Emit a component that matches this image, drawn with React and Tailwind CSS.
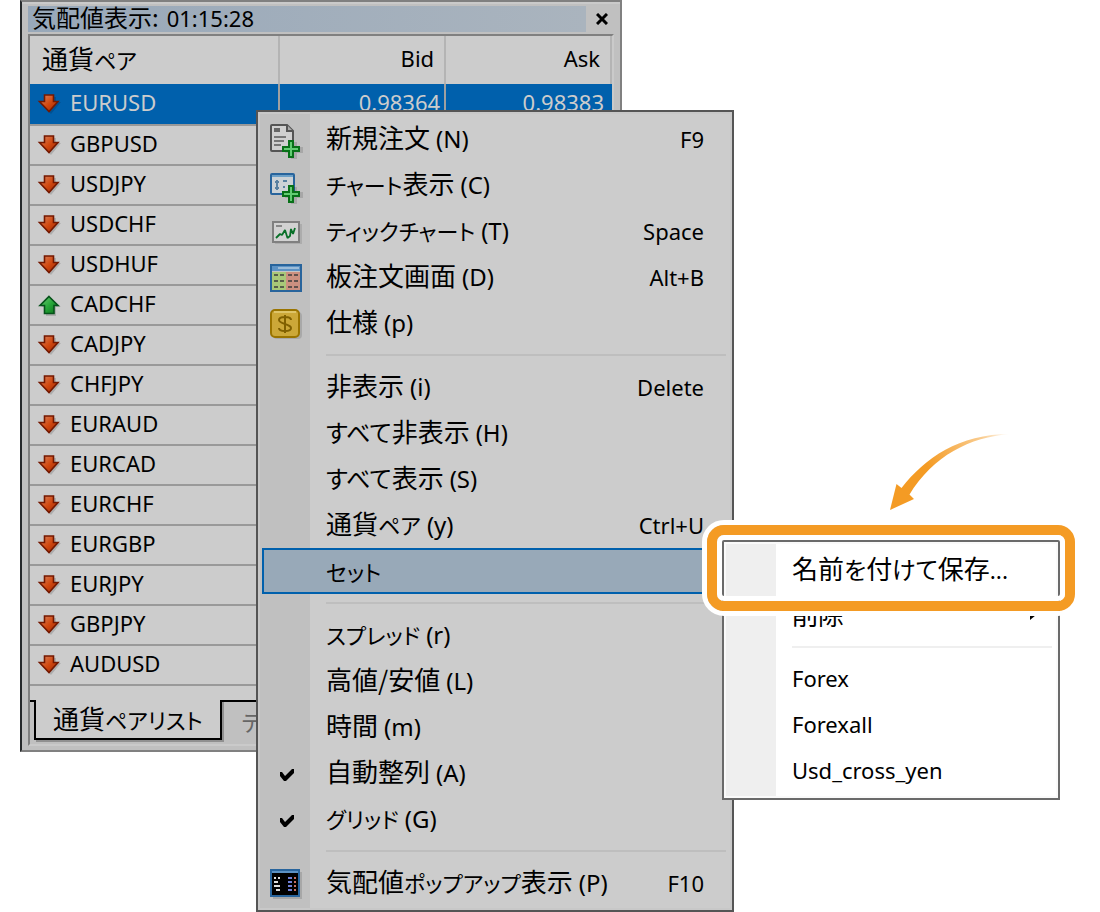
import React, { useState } from 'react';

const LATIN = "font-['Noto_Sans','Noto_Sans_CJK_JP',sans-serif] text-[22px]";
const JAPANESE = "font-['Noto_Sans_CJK_JP','Noto_Sans',sans-serif] text-[26px] [font-feature-settings:'palt']";

// Kana are set narrower than kanji, as in the Windows UI font
const JapaneseText = ({ children }) =>
  children.split(/([ァ-ヶー]+|[ぁ-ん]+|\.+)/).map((part, i) => {
    if (/^[ァ-ヶー.]/.test(part)) return <span key={i} className="text-[22px]">{part}</span>;
    if (/^[ぁ-ん]/.test(part)) return <span key={i} className="text-[24px]">{part}</span>;
    return part;
  });

const ArrowIcon = ({ up }) => (
  <svg width="24" height="22" viewBox="0 -1 24 22" className="block overflow-visible">
    <defs>
      <linearGradient id="redArrow" x1="0" y1="0" x2="1" y2="1">
        <stop offset="0" stopColor="#d88a68" />
        <stop offset="0.5" stopColor="#d24a12" />
        <stop offset="1" stopColor="#a02400" />
      </linearGradient>
      <linearGradient id="greenArrow" x1="0" y1="0" x2="1" y2="1">
        <stop offset="0" stopColor="#74cc78" />
        <stop offset="0.5" stopColor="#28a83a" />
        <stop offset="1" stopColor="#087018" />
      </linearGradient>
    </defs>
    {up ? (
      <>
        <path d="M13 3l10 9h-5v9H8v-9H3z" fill="#000" opacity="0.15" />
        <path d="M11 1.500L20 10.500h-4v8H6.500v-8H2z" fill="url(#greenArrow)" stroke="#06521a" strokeWidth="1.600" />
      </>
    ) : (
      <>
        <path d="M8 3h10v5h5L13 20 3 10h5z" fill="#000" opacity="0.15" />
        <path d="M6.500 1h9v6.500h4.500L11 17.500 1.500 7.500h5z" fill="url(#redArrow)" stroke="#741800" strokeWidth="1.600" />
      </>
    )}
  </svg>
);

const GreenPlus = () => (
  <>
    <path d="M21 18h6v5h6v6h-6v6h-6v-6h-6v-6h6z" fill="#000" opacity="0.13" />
    <path d="M19 17h4v6h6v4h-6v6h-4v-6h-6v-4h6z" fill="#62cc72" stroke="#087018" strokeWidth="2" />
  </>
);

const NewOrderIcon = () => (
  <svg width="32" height="36" viewBox="0 -2 32 36" className="block overflow-visible">
    <path d="M2 1h15l6 6v20H2a1 1 0 0 1-1-1V2a1 1 0 0 1 1-1z" fill="#d0d0d0" stroke="#555" strokeWidth="2" />
    <path d="M17 1v6h6" fill="#aaa" stroke="#555" strokeWidth="2" />
    <path d="M4 13h12M4 17h10M4 21h7" stroke="#777" strokeWidth="2" />
    <path d="M4 4h6v4H4z" fill="#666" />
    <GreenPlus />
  </svg>
);

const ChartWindowIcon = () => (
  <svg width="32" height="36" viewBox="0 -1 32 36" className="block overflow-visible">
    <rect x="1" y="5" width="23" height="20" rx="1" fill="#ccd2d6" stroke="#28649c" strokeWidth="2" />
    <path d="M2 7h21" stroke="#6ca0c8" strokeWidth="2" />
    <path d="M7 11v10M5 13h4M5 19h4M13 12h4M13 18h2" stroke="#5880a0" strokeWidth="2" />
    <GreenPlus />
  </svg>
);

const TickIcon = () => (
  <svg width="32" height="24" viewBox="0 0 32 24" className="block">
    <path d="M5 4h27v20H5z" fill="#000" opacity="0.1" />
    <rect x="3" y="2" width="26" height="20" fill="#d2d2d2" stroke="#808080" strokeWidth="2" />
    <path d="M6 6h6" stroke="#888" strokeWidth="2" />
    <path
      d="M6 18l4-4 2 1 3-5 2.500 8 2.500-2 1-7 2 5 2-6"
      fill="none"
      stroke="#087028"
      strokeWidth="1.800"
      strokeLinejoin="bevel"
    />
  </svg>
);

const DepthIcon = () => (
  <svg width="32" height="30" viewBox="0 0 32 30" className="block">
    <rect x="1" y="2" width="30" height="26" fill="#c4c4c4" stroke="#28649c" strokeWidth="2" />
    <path d="M2 3h28v5H2z" fill="#5c92c4" />
    <path d="M8 5h21" stroke="#9cbcd8" strokeWidth="2" />
    <path d="M2 9h14v18H2z" fill="#a8c878" />
    <path d="M16 9h14v18H16z" fill="#cc9080" />
    <path
      d="M4 12h10M4 18h10M4 24h10M18 12h10M18 18h10M18 24h10"
      stroke="#3c3c3c"
      strokeWidth="1.600"
      strokeDasharray="4 2"
    />
  </svg>
);

const SpecIcon = () => (
  <svg width="32" height="30" viewBox="0 0 32 30" className="block">
    <rect x="3" y="3" width="29" height="27" rx="4" fill="#000" opacity="0.12" />
    <rect x="1" y="1" width="28" height="27" rx="4" fill="#cca838" stroke="#9a7400" strokeWidth="2" />
    <path d="M4 3h22" stroke="#dec468" strokeWidth="2" />
    <path
      d="M15 6v18M21 11c0-2-3-3-6-3s-6 1-6 3 3 3 6 4 6 2 6 4-3 3-6 3-6-1-6-3"
      fill="none"
      stroke="#806000"
      strokeWidth="2"
    />
  </svg>
);

const PopupIcon = () => (
  <svg width="32" height="30" viewBox="0 0 32 30" className="block">
    <path d="M3 3h29v27H3z" fill="#000" opacity="0.13" />
    <rect x="1" y="1" width="28" height="26" fill="#000" stroke="#28649c" strokeWidth="2" />
    <path d="M2 3h26" stroke="#5c92c4" strokeWidth="2" />
    <path d="M4 9h2M8 9h2M4 13h4M4 17h6M6 21h4" stroke="#ddd" strokeWidth="2" />
    <path d="M18 9h4M18 13h4M18 17h4M18 21h4" stroke="#7080d8" strokeWidth="2" />
    <path d="M24 9h2M24 13h2M24 17h2M24 21h2" stroke="#c87060" strokeWidth="2" />
  </svg>
);

const CheckIcon = () => (
  <svg width="16" height="16" viewBox="0 -1 16 16" className="block">
    <path d="M2 5v4l4 5h2l8-8V2h-2L7 9 4 5z" fill="#000" />
  </svg>
);

const symbols = [
  { name: 'EURUSD', bid: '0.98364', ask: '0.98383', selected: true },
  { name: 'GBPUSD' },
  { name: 'USDJPY' },
  { name: 'USDCHF' },
  { name: 'USDHUF' },
  { name: 'CADCHF', up: true },
  { name: 'CADJPY' },
  { name: 'CHFJPY' },
  { name: 'EURAUD' },
  { name: 'EURCAD' },
  { name: 'EURCHF' },
  { name: 'EURGBP' },
  { name: 'EURJPY' },
  { name: 'GBPJPY' },
  { name: 'AUDUSD' },
];

const menuItems = [
  { label: '新規注文', mnemonic: '(N)', shortcut: 'F9', icon: <NewOrderIcon /> },
  { label: 'チャート表示', mnemonic: '(C)', icon: <ChartWindowIcon /> },
  { label: 'ティックチャート', mnemonic: '(T)', shortcut: 'Space', icon: <TickIcon /> },
  { label: '板注文画面', mnemonic: '(D)', shortcut: 'Alt+B', icon: <DepthIcon /> },
  { label: '仕様', mnemonic: '(p)', icon: <SpecIcon /> },
  'separator',
  { label: '非表示', mnemonic: '(i)', shortcut: 'Delete' },
  { label: 'すべて非表示', mnemonic: '(H)' },
  { label: 'すべて表示', mnemonic: '(S)' },
  { label: '通貨ペア', mnemonic: '(y)', shortcut: 'Ctrl+U' },
  { label: 'セット', active: true },
  'separator',
  { label: 'スプレッド', mnemonic: '(r)' },
  { label: '高値/安値', mnemonic: '(L)' },
  { label: '時間', mnemonic: '(m)' },
  { label: '自動整列', mnemonic: '(A)', icon: <CheckIcon /> },
  { label: 'グリッド', mnemonic: '(G)', icon: <CheckIcon /> },
  'separator',
  { label: '気配値ポップアップ表示', mnemonic: '(P)', shortcut: 'F10', icon: <PopupIcon /> },
];

const setItems = [
  { label: '名前を付けて保存...' },
  { label: '削除', submenu: true },
  'separator',
  { name: 'Forex' },
  { name: 'Forexall' },
  { name: 'Usd_cross_yen' },
];

const MenuItem = ({ item }) => (
  <button
    type="button"
    role="menuitem"
    className={`flex h-[46px] w-full items-center border-2 text-left ${item.submenu ? 'pr-4' : 'pr-[22px]'} ${
      item.active ? 'border-[#0060ac] bg-[#98a9b8]' : 'border-transparent'
    }`}
  >
    <span className="flex w-11 shrink-0 justify-center pt-0.5">{item.icon}</span>
    <span className="ml-[18px] flex grow items-baseline gap-[6px] whitespace-nowrap pb-0.5 leading-[38px]">
      {item.label && (
        <span className={JAPANESE}>
          <JapaneseText>{item.label}</JapaneseText>
        </span>
      )}
      {item.mnemonic && <span className="font-['Noto_Sans',sans-serif] text-[24px]">{item.mnemonic}</span>}
      {item.name && <span className={LATIN}>{item.name}</span>}
    </span>
    {item.shortcut && <span className={LATIN}>{item.shortcut}</span>}
    {item.submenu && (
      <svg width="6" height="10" viewBox="0 0 6 10">
        <path d="M0 0l6 5-6 5z" fill="#000" />
      </svg>
    )}
  </button>
);

const Menu = ({ items, label, listClass, lineClass }) => (
  <ul role="menu" aria-label={label} className={`p-0.5 ${listClass}`}>
    {items.map((item, i) =>
      item === 'separator' ? (
        <li key={i} role="separator" className="py-2 pl-16 pr-0.5">
          <div className={`h-0.5 ${lineClass}`} />
        </li>
      ) : (
        <li key={i} role="none">
          <MenuItem item={item} />
        </li>
      )
    )}
  </ul>
);

const MarketWatch = () => {
  const [tab, setTab] = useState('symbols');

  return (
    <section className="w-full max-w-[602px] border-2 border-[#808080] border-l-[#26292b] bg-[#c0c0c0] px-[6px] pt-1 pb-1 shadow-[inset_0_2px_0_#cacaca]">
      <header className="mb-0.5 flex h-[26px] items-center">
        <h1 className="flex h-full grow items-baseline gap-2 whitespace-nowrap bg-gradient-to-r from-[#98a8b9] to-[#aab4be] pl-1 leading-[22px]">
          <span className="font-['Noto_Sans_CJK_JP',sans-serif] text-[24px] [font-feature-settings:'palt']">気配値表示:</span>
          <span className={LATIN}>01:15:28</span>
        </h1>
        <button type="button" aria-label="閉じる" className="flex w-7 justify-center pl-1">
          <svg width="12" height="12" viewBox="0 0 12 12">
            <path d="M1 1l10 10M11 1L1 11" stroke="#000" strokeWidth="3" />
          </svg>
        </button>
      </header>

      <div className="border-2 border-[#cacaca] border-l-[#808080] border-t-[#808080] bg-[#c0c0c0]">
        <div className="bg-[#ccc] pb-[14px]">
          <table className={`w-full table-fixed border-separate border-spacing-0 ${LATIN}`}>
            <colgroup>
              <col className="w-[43%]" />
              <col />
              <col />
            </colgroup>
            <thead className="leading-[40px]">
              <tr className="h-12">
                <th className={`border-r-2 border-[#b4b4b4] p-0 pb-1 pl-3 text-left font-normal ${JAPANESE}`}>
                  <JapaneseText>通貨ペア</JapaneseText>
                </th>
                <th className="border-r-2 border-[#b4b4b4] p-0 pr-[10px] pb-1 text-right font-normal">Bid</th>
                <th className="border-r-2 border-[#b4b4b4] p-0 pr-[10px] pb-1 text-right font-normal">Ask</th>
              </tr>
            </thead>
            <tbody className="leading-[34px]">
              {symbols.map((s) => (
                <tr key={s.name} className={s.selected ? 'bg-[#0060ac] text-[#ccc]' : ''}>
                  <td className={`border-b-2 border-b-[#999] p-0 pl-2 ${s.selected ? 'border-r-2 border-r-[#a0a0a0]' : ''}`}>
                    <div className={`flex items-center gap-2 ${s.selected ? 'h-10' : 'h-[38px]'}`}>
                      <ArrowIcon up={s.up} />
                      <span className="pb-1 text-[22px]">{s.name}</span>
                    </div>
                  </td>
                  <td className={`border-b-2 border-b-[#999] p-0 pr-1 pb-1 text-right ${s.selected ? 'border-r-2 border-r-[#a0a0a0]' : ''}`}>{s.bid}</td>
                  <td className="border-b-2 border-b-[#999] p-0 pr-2 pb-1 text-right">{s.ask}</td>
                </tr>
              ))}
            </tbody>
          </table>
        </div>

        <div role="tablist" className="flex h-11">
          <div className="h-0.5 w-1 bg-black" />
          <button
            type="button"
            role="tab"
            aria-selected={tab === 'symbols'}
            onClick={() => setTab('symbols')}
            className={`h-10 whitespace-nowrap border-2 border-t-0 border-black bg-[#ccc] px-[17px] pb-0.5 leading-[36px] shadow-[2px_2px_0_#909090] ${JAPANESE}`}
          >
            <JapaneseText>通貨ペアリスト</JapaneseText>
          </button>
          <div className="flex grow border-t-2 border-black pl-5">
            <button
              type="button"
              role="tab"
              aria-selected={tab === 'ticks'}
              onClick={() => setTab('ticks')}
              className={`h-9 leading-[34px] text-[#666] ${JAPANESE}`}
            >
              <JapaneseText>ティック</JapaneseText>
            </button>
          </div>
        </div>
      </div>
    </section>
  );
};

const CalloutArrow = () => (
  <svg width="130" height="80" viewBox="0 0 130 80" className="absolute left-[888px] top-[432px]">
    <defs>
      <linearGradient id="calloutFade" gradientUnits="userSpaceOnUse" x1="122" y1="2" x2="40" y2="36">
        <stop offset="0" stopColor="#f49b24" stopOpacity="0" />
        <stop offset="0.3" stopColor="#f49b24" stopOpacity="0.5" />
        <stop offset="1" stopColor="#f49b24" />
      </linearGradient>
    </defs>
    <path
      d="M2 78L8.500 52l5 4C37 26 71 2 122 2 82 5 45 24 21.500 62.500L26 67z"
      fill="url(#calloutFade)"
    />
  </svg>
);

const App = () => (
  <main className="relative min-h-[912px] w-full overflow-hidden bg-white pl-5 text-black">
    <MarketWatch />

    <div className="absolute left-64 top-[110px] w-[478px] border-2 border-[#555] bg-[#c8c8c8] p-0.5">
      <Menu
        items={menuItems}
        label="気配値表示"
        listClass="bg-[linear-gradient(to_right,#c0c0c0_50px,#ccc_50px)]"
        lineClass="bg-[#bebebe]"
      />
    </div>

    <div className="absolute left-[722px] top-[540px] w-[338px] border-2 border-[#6a6a6a] bg-[#fafafa] p-0.5">
      <Menu
        items={setItems}
        label="セット"
        listClass="bg-[linear-gradient(to_right,#efefef_50px,#fff_50px)]"
        lineClass="bg-[#efefef]"
      />
    </div>

    {/* Highlight around the save entry: white, orange, white */}
    <div className="pointer-events-none absolute left-[702px] top-[520px] h-24 w-[378px] rounded-[22px] border-[5px] border-white">
      <div className="h-full rounded-[17px] border-[10px] border-[#f49b24]">
        <div className="h-full rounded-[7px] border-[5px] border-white" />
      </div>
    </div>
    <CalloutArrow />
  </main>
);

export default App;
